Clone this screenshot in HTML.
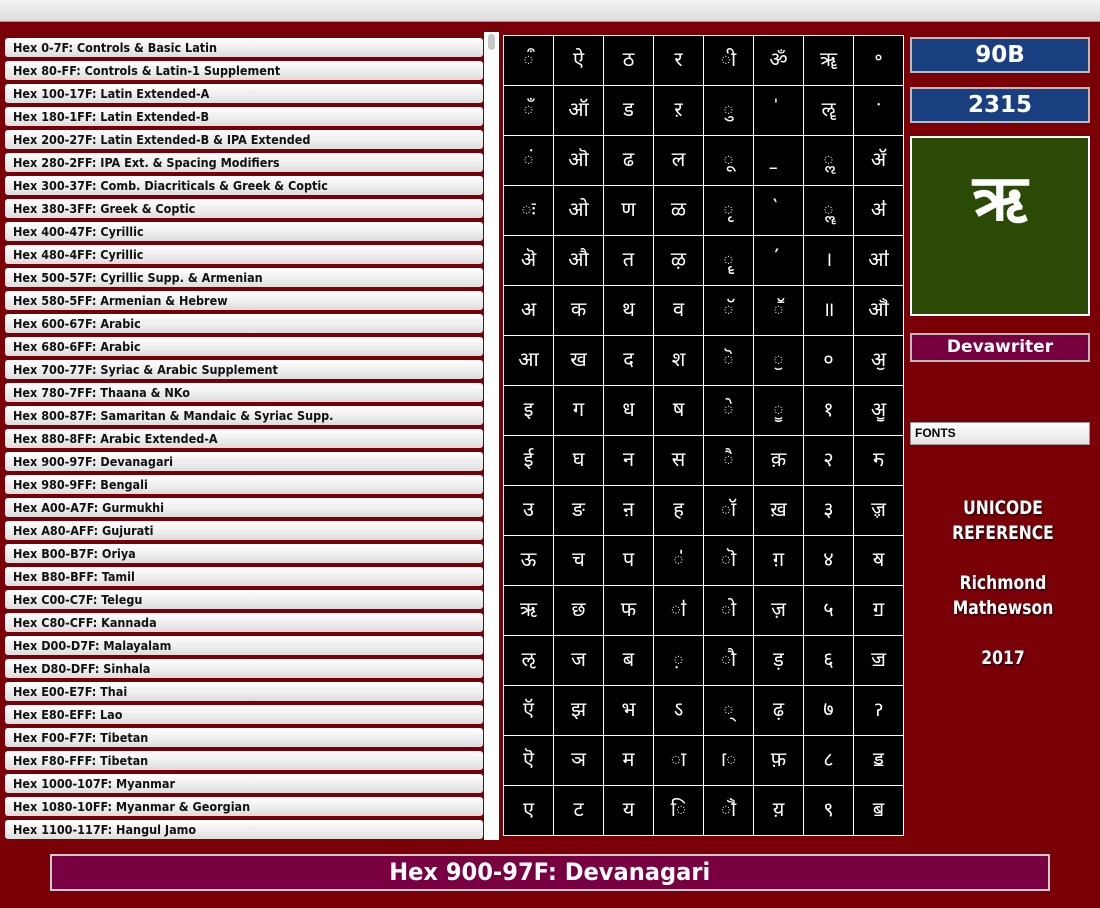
<!DOCTYPE html>
<html><head><meta charset="utf-8"><style>
*{margin:0;padding:0;box-sizing:border-box}
body{width:1100px;height:908px;background:#7a0008;position:relative;overflow:hidden;font-family:"Liberation Sans","DejaVu Sans",sans-serif}
.top{position:absolute;left:0;top:0;width:1100px;height:22px;background:linear-gradient(#f4f4f4,#dcdcdc);border-bottom:1px solid #999}
.list{position:absolute;left:5px;top:38px;width:478px}
.list div{height:19px;margin-bottom:4px;background:linear-gradient(#fff,#ececec 60%,#dcdcdc);border-radius:3px;font-size:12.5px;font-weight:bold;color:#111;line-height:19px;padding-left:8px;white-space:nowrap;font-family:"DejaVu Sans Condensed","DejaVu Sans",sans-serif}
.sb{position:absolute;left:484px;top:32px;width:15px;height:808px;background:#fff}
.sb i{position:absolute;left:4px;top:2px;width:7px;height:16px;border-radius:4px;background:#c8c8c8}
.grid{position:absolute;left:503px;top:35px;width:401px;height:801px;background:#fff;padding:1px;display:grid;grid-template-columns:repeat(8,49px);grid-template-rows:repeat(16,49px);gap:1px;grid-auto-flow:column}
.grid span{background:#000;color:#fff;font-size:20px;text-align:center;line-height:49px;overflow:hidden;font-family:"Liberation Sans","Noto Sans Devanagari","Lohit Devanagari",sans-serif}
.box{position:absolute;left:910px;width:180px;border:2px solid #bbb;color:#fff;text-align:center;font-weight:bold}
.b1{top:37px;height:36px;background:#1a3f80;font-size:23px;line-height:32px;font-family:"DejaVu Sans",sans-serif}
.b2{top:87px;height:36px;background:#1a3f80;font-size:23px;line-height:32px;font-family:"DejaVu Sans",sans-serif}
.g{top:136px;height:180px;background:#2a4a05;border-color:#fff;font-size:64px;line-height:120px}
.dw{top:333px;height:29px;background:#780040;font-size:17px;line-height:25px;font-family:"DejaVu Sans",sans-serif}
.fonts{position:absolute;left:910px;top:422px;width:180px;height:23px;background:linear-gradient(#fff,#e2e2e2);border:1px solid #999;font-size:12px;font-weight:bold;line-height:21px;padding-left:4px}
.cred{position:absolute;left:910px;top:496px;width:186px;text-align:center;color:#fff;font-weight:bold;font-size:19px;line-height:25px;font-family:"DejaVu Sans",sans-serif;text-shadow:1px 1px 2px #000;transform:scaleX(0.82)}
.bot{position:absolute;left:50px;top:854px;width:1000px;height:37px;background:#780040;border:2px solid #ccc;color:#fff;text-align:center;font-size:24px;line-height:33px;font-family:"DejaVu Sans","Liberation Sans",sans-serif}
.bot span{display:inline-block;font-weight:bold;transform:scaleX(0.94)}
</style></head><body>
<div class="top"></div>
<div class="list">
<div>Hex 0-7F: Controls &amp; Basic Latin</div>
<div>Hex 80-FF: Controls &amp; Latin-1 Supplement</div>
<div>Hex 100-17F: Latin Extended-A</div>
<div>Hex 180-1FF: Latin Extended-B</div>
<div>Hex 200-27F: Latin Extended-B &amp; IPA Extended</div>
<div>Hex 280-2FF: IPA Ext. &amp; Spacing Modifiers</div>
<div>Hex 300-37F: Comb. Diacriticals &amp; Greek &amp; Coptic</div>
<div>Hex 380-3FF: Greek &amp; Coptic</div>
<div>Hex 400-47F: Cyrillic</div>
<div>Hex 480-4FF: Cyrillic</div>
<div>Hex 500-57F: Cyrillic Supp. &amp; Armenian</div>
<div>Hex 580-5FF: Armenian &amp; Hebrew</div>
<div>Hex 600-67F: Arabic</div>
<div>Hex 680-6FF: Arabic</div>
<div>Hex 700-77F: Syriac &amp; Arabic Supplement</div>
<div>Hex 780-7FF: Thaana &amp; NKo</div>
<div>Hex 800-87F: Samaritan &amp; Mandaic &amp; Syriac Supp.</div>
<div>Hex 880-8FF: Arabic Extended-A</div>
<div>Hex 900-97F: Devanagari</div>
<div>Hex 980-9FF: Bengali</div>
<div>Hex A00-A7F: Gurmukhi</div>
<div>Hex A80-AFF: Gujurati</div>
<div>Hex B00-B7F: Oriya</div>
<div>Hex B80-BFF: Tamil</div>
<div>Hex C00-C7F: Telegu</div>
<div>Hex C80-CFF: Kannada</div>
<div>Hex D00-D7F: Malayalam</div>
<div>Hex D80-DFF: Sinhala</div>
<div>Hex E00-E7F: Thai</div>
<div>Hex E80-EFF: Lao</div>
<div>Hex F00-F7F: Tibetan</div>
<div>Hex F80-FFF: Tibetan</div>
<div>Hex 1000-107F: Myanmar</div>
<div>Hex 1080-10FF: Myanmar &amp; Georgian</div>
<div>Hex 1100-117F: Hangul Jamo</div>
</div>
<div class="sb"><i></i></div>
<div class="grid">
<span>ऀ</span><span>ँ</span><span>ं</span><span>ः</span><span>ऄ</span><span>अ</span><span>आ</span><span>इ</span><span>ई</span><span>उ</span><span>ऊ</span><span>ऋ</span><span>ऌ</span><span>ऍ</span><span>ऎ</span><span>ए</span>
<span>ऐ</span><span>ऑ</span><span>ऒ</span><span>ओ</span><span>औ</span><span>क</span><span>ख</span><span>ग</span><span>घ</span><span>ङ</span><span>च</span><span>छ</span><span>ज</span><span>झ</span><span>ञ</span><span>ट</span>
<span>ठ</span><span>ड</span><span>ढ</span><span>ण</span><span>त</span><span>थ</span><span>द</span><span>ध</span><span>न</span><span>ऩ</span><span>प</span><span>फ</span><span>ब</span><span>भ</span><span>म</span><span>य</span>
<span>र</span><span>ऱ</span><span>ल</span><span>ळ</span><span>ऴ</span><span>व</span><span>श</span><span>ष</span><span>स</span><span>ह</span><span>ऺ</span><span>ऻ</span><span>़</span><span>ऽ</span><span>ा</span><span>ि</span>
<span>ी</span><span>ु</span><span>ू</span><span>ृ</span><span>ॄ</span><span>ॅ</span><span>ॆ</span><span>े</span><span>ै</span><span>ॉ</span><span>ॊ</span><span>ो</span><span>ौ</span><span>्</span><span>ॎ</span><span>ॏ</span>
<span>ॐ</span><span>॑</span><span>॒</span><span>॓</span><span>॔</span><span>ॕ</span><span>ॖ</span><span>ॗ</span><span>क़</span><span>ख़</span><span>ग़</span><span>ज़</span><span>ड़</span><span>ढ़</span><span>फ़</span><span>य़</span>
<span>ॠ</span><span>ॡ</span><span>ॢ</span><span>ॣ</span><span>।</span><span>॥</span><span>०</span><span>१</span><span>२</span><span>३</span><span>४</span><span>५</span><span>६</span><span>७</span><span>८</span><span>९</span>
<span>॰</span><span>ॱ</span><span>ॲ</span><span>ॳ</span><span>ॴ</span><span>ॵ</span><span>ॶ</span><span>ॷ</span><span>ॸ</span><span>ॹ</span><span>ॺ</span><span>ॻ</span><span>ॼ</span><span>ॽ</span><span>ॾ</span><span>ॿ</span>
</div>
<div class="box b1">90B</div>
<div class="box b2">2315</div>
<div class="box g">ऋ</div>
<div class="box dw">Devawriter</div>
<div class="fonts">FONTS</div>
<div class="cred">UNICODE<br>REFERENCE<br><br>Richmond<br>Mathewson<br><br>2017</div>
<div class="bot"><span>Hex 900-97F: Devanagari</span></div>
</body></html>
